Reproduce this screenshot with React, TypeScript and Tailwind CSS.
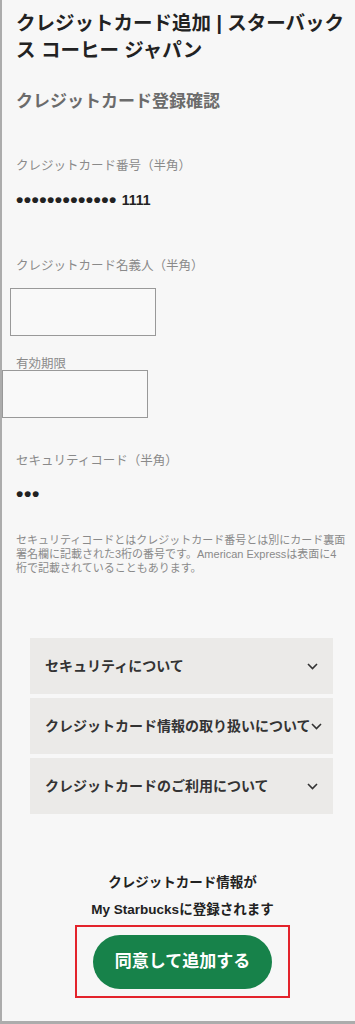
import React from "react";

const FONT = { fontFamily: '"Liberation Sans", "Noto Sans CJK JP", sans-serif' };

const sections = [
    "セキュリティについて",
    "クレジットカード情報の取り扱いについて",
    "クレジットカードのご利用について",
];

function Chevron() {
    return (
        <svg width="11" height="7" viewBox="0 0 11 7" className="shrink-0" fill="none">
            <path d="M1 1l4.5 4.5L10 1" stroke="#333" strokeWidth="1.6" />
        </svg>
    );
}

export default function App() {
    return (
        <div style={FONT} className="h-[1024px] w-[355px] overflow-hidden border-l-2 border-b-[3px] border-[#acacac] bg-[#f7f7f7]">
            <div className="pl-[14px] pr-[10px] pt-[10px]">
                <h1 className="text-[19.5px] font-bold leading-[27px] text-[#222]">
                    クレジットカード追加 | スターバックス コーヒー ジャパン
                </h1>
                <h2 className="mt-[26px] text-[17px] font-bold leading-[24px] text-[#6b6b6b]">クレジットカード登録確認</h2>

                <p className="mt-[43px] text-[12.5px] leading-[18px] text-[#8a8a8a]">クレジットカード番号（半角）</p>
                <p className="mt-[16px] flex h-[18px] items-center text-[14px] font-bold text-[#222]">
                    <span className="text-[21px] leading-[18px] tracking-[0.4px]">•••••••••••••</span>
                    <span className="ml-[5px] leading-[18px]">1111</span>
                </p>

                <p className="mt-[48px] text-[12.5px] leading-[18px] text-[#8a8a8a]">クレジットカード名義人（半角）</p>
                <div className="mt-[13px] -ml-[6px] h-[48px] w-[146px] border border-[#999] bg-[#f9f9f9]" />

                <p className="mt-[21px] text-[12.5px] leading-[14px] text-[#8a8a8a]">有効期限</p>
                <div className="-mt-px -ml-[14px] h-[48px] w-[146px] border border-[#999] bg-[#f9f9f9]" />

                <p className="mt-[34px] text-[12.5px] leading-[18px] text-[#8a8a8a]">セキュリティコード（半角）</p>
                <p className="mt-[15px] h-[18px] text-[21px] font-bold leading-[18px] tracking-[0.6px] text-[#222]">•••</p>

                <p className="mt-[30px] whitespace-nowrap text-[11px] leading-[14px] text-[#8a8a8a]">
                    セキュリティコードとはクレジットカード番号とは別にカード裏面
                    <br />
                    署名欄に記載された3桁の番号です。American Expressは表面に4
                    <br />
                    桁で記載されていることもあります。
                </p>

                <div className="mt-[63px] ml-[14px] mr-[12px] flex flex-col gap-[4px]">
                    {sections.map((label) => (
                        <div key={label} className="flex h-[56px] items-center bg-[#ebeae8] pl-[15px] pr-[15px]">
                            <span className="whitespace-nowrap text-[14px] font-bold text-[#333]">{label}</span>
                            <span className="ml-auto flex shrink-0 items-center">
                                <Chevron />
                            </span>
                        </div>
                    ))}
                </div>

                <div className="mt-[55px] flex flex-col items-center pl-[4px]">
                    <p className="text-[13.5px] font-bold leading-[27px] text-[#222]">クレジットカード情報が</p>
                    <p className="text-[13.5px] font-bold leading-[27px] text-[#222]">My Starbucksに登録されます</p>
                    <div className="mt-[2px] flex h-[73px] w-[215px] items-center justify-center border-[2.5px] border-[#e3232b]">
                        <button className="h-[54px] w-[179px] rounded-full bg-[#17824a] text-[17px] font-bold text-white">
                            同意して追加する
                        </button>
                    </div>
                </div>
            </div>
        </div>
    );
}
